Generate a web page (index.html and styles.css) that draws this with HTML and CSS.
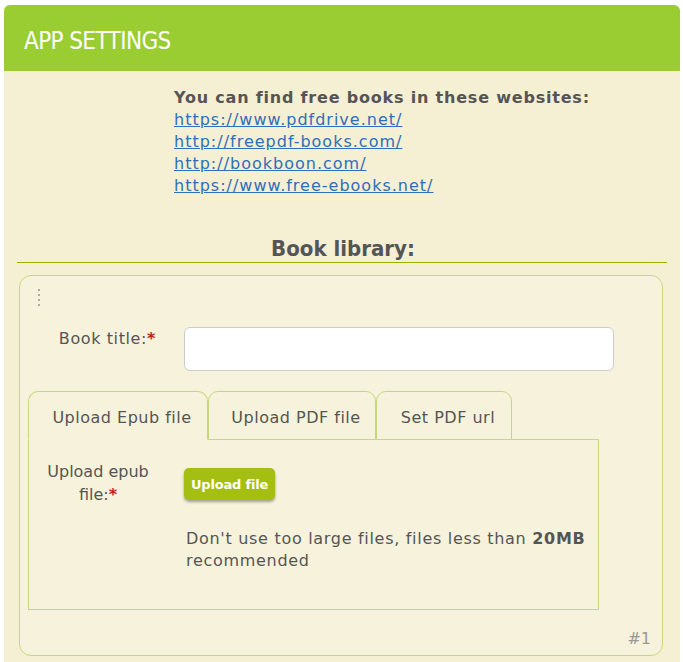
FILE: index.html
```html
<!DOCTYPE html>
<html>
<head>
<meta charset="utf-8">
<link rel="stylesheet" href="styles.css">
</head>
<body>
<div class="panel">
  <div class="panel-header"><h1 class="panel-title">APP SETTINGS</h1></div>
  <div class="panel-body">
    <div class="info">
      <strong class="info-title">You can find free books in these websites:</strong>
      <a href="#">https://www.pdfdrive.net/</a>
      <a href="#">http://freepdf-books.com/</a>
      <a href="#">http://bookboon.com/</a>
      <a href="#">https://www.free-ebooks.net/</a>
    </div>
    <h2 class="section-title">Book library:</h2>
    <div class="card">
      <div class="handle"><span></span><span></span><span></span><span></span></div>
      <div class="field-row">
        <label class="field-label">Book title:<span class="req">*</span></label>
        <input class="text-input" type="text">
      </div>
      <div class="tabs">
        <div class="tab active">Upload Epub file</div>
        <div class="tab">Upload PDF file</div>
        <div class="tab">Set PDF url</div>
      </div>
      <div class="tab-panel">
        <div class="upload-row">
          <div class="upload-label">Upload epub<br>file:<span class="req">*</span></div>
          <div class="upload-content">
            <button class="btn-upload">Upload file</button>
            <p class="hint">Don't use too large files, files less than <b>20MB</b> recommended</p>
          </div>
        </div>
      </div>
      <div class="card-index">#1</div>
    </div>
  </div>
</div>
</body>
</html>
```

FILE: styles.css
```css
* { box-sizing: border-box; }
html, body { margin: 0; padding: 0; background: #fff; }
body {
  font-family: "DejaVu Sans", Verdana, sans-serif;
  color: #555;
  letter-spacing: 0.6px;
}
.panel {
  margin: 5px 3px 0 4px;
  border-radius: 6px 6px 0 0;
  background: #F5EFD3;
  min-height: 657px;
}
.panel-header {
  height: 66px;
  background: #9ACD32;
  border-radius: 6px 6px 0 0;
  display: flex;
  align-items: center;
  padding-left: 20px;
}
.panel-title {
  margin: 0;
  font-family: "DejaVu Sans Condensed", "Liberation Sans Narrow", "Roboto", sans-serif;
  font-stretch: condensed;
  font-weight: normal;
  font-size: 24px;
  letter-spacing: -0.6px;
  color: #fff;
  padding-top: 5px;
}
.panel-body {
  padding: 16px 0 0 0;
}
.info {
  padding-left: 170px;
  display: flex;
  flex-direction: column;
  align-items: flex-start;
  font-size: 16px;
  line-height: 22px;
}
.info-title { font-weight: bold; color: #555; letter-spacing: 0.8px; }
.info a { color: #2F6EBA; text-decoration: underline; letter-spacing: 1px; }
.section-title {
  margin: 39px 13px 0 13px;
  text-align: center;
  font-family: "DejaVu Sans Condensed", "Liberation Sans Narrow", "Roboto", sans-serif;
  font-stretch: condensed;
  font-size: 22px;
  letter-spacing: 0;
  line-height: 26px;
  color: #555;
  border-bottom: 1px solid #8CB800;
  padding: 0 0 0 2px;
}
.card {
  margin: 12px 17px 0 15px;
  background: #F7F2DB;
  border: 1px solid #C5D97B;
  border-radius: 12px;
  padding: 13px 8px 8px 8px;
  height: 381px;
  position: relative;
}
.handle {
  display: flex;
  flex-direction: column;
  gap: 3px;
  padding-left: 10px;
  height: 20px;
}
.handle span {
  width: 2px;
  height: 2px;
  background: #aaa;
  display: block;
}
.field-row {
  display: flex;
  align-items: flex-start;
  margin-top: 18px;
}
.field-label {
  width: 128px;
  text-align: right;
  font-size: 16px;
  line-height: 22px;
  padding-top: 1px;
}
.req { color: #B22; font-weight: bold; }
.text-input {
  margin-left: 28px;
  width: 430px;
  height: 44px;
  border: 1px solid #ccc;
  border-radius: 6px;
  background: #fff;
}
.tabs {
  display: flex;
  margin-top: 20px;
  position: relative;
  z-index: 1;
}
.tab {
  height: 49px;
  border: 1px solid #C5D97B;
  border-radius: 10px 10px 0 0;
  font-size: 16px;
  display: flex;
  align-items: center;
  justify-content: center;
  background: #F7F2DB;
  padding: 3px 0 0 8px;
  letter-spacing: 0.5px;
}
.tab:nth-child(1) { width: 180px; border-bottom-color: #F7F2DB; }
.tab:nth-child(2) { width: 168px; }
.tab:nth-child(3) { width: 136px; }
.tab-panel {
  width: 571px;
  height: 171px;
  margin-top: -1px;
  border: 1px solid #C5D97B;
  padding-top: 20px;
}
.upload-row { display: flex; }
.upload-label {
  width: 138px;
  text-align: center;
  font-size: 16px;
  line-height: 23px;
  letter-spacing: 0;
}
.upload-content {
  padding-left: 17px;
  padding-top: 8px;
}
.btn-upload {
  background: #A4BE12;
  color: #fff;
  border: none;
  border-radius: 5px;
  font-family: "DejaVu Sans", Verdana, sans-serif;
  font-weight: bold;
  font-size: 13px;
  letter-spacing: -0.2px;
  height: 32px;
  padding: 0 7px;
  box-shadow: 0 2px 3px rgba(0,0,0,0.35);
}
.hint {
  margin: 28px 0 0 2px;
  font-size: 16px;
  line-height: 22px;
  width: 410px;
  letter-spacing: 0.7px;
}
.card-index {
  position: absolute;
  right: 11px;
  bottom: 7px;
  font-size: 16px;
  color: #999;
  letter-spacing: 0;
}
```
